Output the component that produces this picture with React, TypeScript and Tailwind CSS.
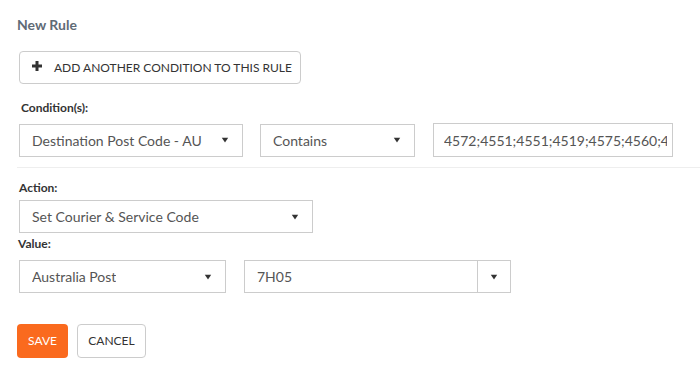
import React from "react";

function Caret() {
  return (
    <svg width="8" height="6" viewBox="0 0 8 6" className="shrink-0">
      <path d="M0.8 0.8 H7.2 L4 5.6 Z" fill="#333" />
    </svg>
  );
}

type SelectProps = {
  label: string;
  width: string;
};

function FakeSelect({ label, width }: SelectProps) {
  return (
    <div
      className={`flex h-[33px] items-center justify-between border border-[#ccc] bg-white pl-[12px] pr-[13px] text-[14px] text-[#555] ${width}`}
    >
      <span className="truncate">{label}</span>
      <Caret />
    </div>
  );
}

export default function App() {
  return (
    <div
      className="min-h-[375px] w-[700px] bg-white pl-[17px] text-[#333]"
      style={{ fontFamily: "Lato, 'Open Sans', Arial, sans-serif" }}
    >
      <div className="pt-[16px] text-[14px] font-bold leading-[17px] text-[#5f6b76]">
        New Rule
      </div>

      <button
        type="button"
        className="mt-[18px] ml-[2px] flex h-[33px] w-[282px] items-center rounded-[4px] border border-[#ccc] bg-white pl-[11px] text-[12px] text-[#333]"
      >
        <svg width="12" height="12" viewBox="0 0 12 12" className="mb-[3px]">
          <path d="M6 1 V11 M1 6 H11" stroke="#333" strokeWidth="3" />
        </svg>
        <span className="ml-[11px]">ADD ANOTHER CONDITION TO THIS RULE</span>
      </button>

      <div className="mt-[16px] ml-[4px] text-[12px] font-bold leading-[15px]">Condition(s):</div>

      <div className="mt-[8px] ml-[2px] flex items-center">
        <FakeSelect label="Destination Post Code - AU" width="w-[224px]" />
        <div className="ml-[17px]">
          <FakeSelect label="Contains" width="w-[155px]" />
        </div>
        <input
          readOnly
          value="4572;4551;4551;4519;4575;4560;4562;4573;4556"
          className="ml-[18px] h-[34px] w-[240px] border border-[#ccc] bg-white pl-[10px] pr-[5px] text-[14px] text-[#555] outline-none"
        />
      </div>

      <div className="mt-[10px] border-t border-[#eee]" />

      <div className="mt-[12px] ml-[2px] text-[12px] font-bold leading-[15px]">Action:</div>

      <div className="mt-[5px] ml-[2px]">
        <FakeSelect label="Set Courier & Service Code" width="w-[294px]" />
      </div>

      <div className="mt-[3px] ml-[1px] text-[12px] font-bold leading-[15px]">Value:</div>

      <div className="mt-[9px] ml-[2px] flex items-center">
        <FakeSelect label="Australia Post" width="w-[207px]" />
        <div className="ml-[18px] flex h-[33px] w-[267px] border border-[#ccc] bg-white text-[14px] text-[#555]">
          <div className="flex flex-1 items-center pl-[12px]">7H05</div>
          <div className="flex w-[33px] items-center justify-center border-l border-[#ccc]">
            <Caret />
          </div>
        </div>
      </div>

      <div className="mt-[31px] flex items-center">
        <button
          type="button"
          className="flex h-[34px] w-[51px] items-center justify-center rounded-[4px] bg-[#fa6a1e] text-[12px] text-white"
        >
          SAVE
        </button>
        <button
          type="button"
          className="ml-[9px] flex h-[34px] w-[69px] items-center justify-center rounded-[4px] border border-[#ccc] bg-white text-[12px] text-[#333]"
        >
          CANCEL
        </button>
      </div>
    </div>
  );
}
